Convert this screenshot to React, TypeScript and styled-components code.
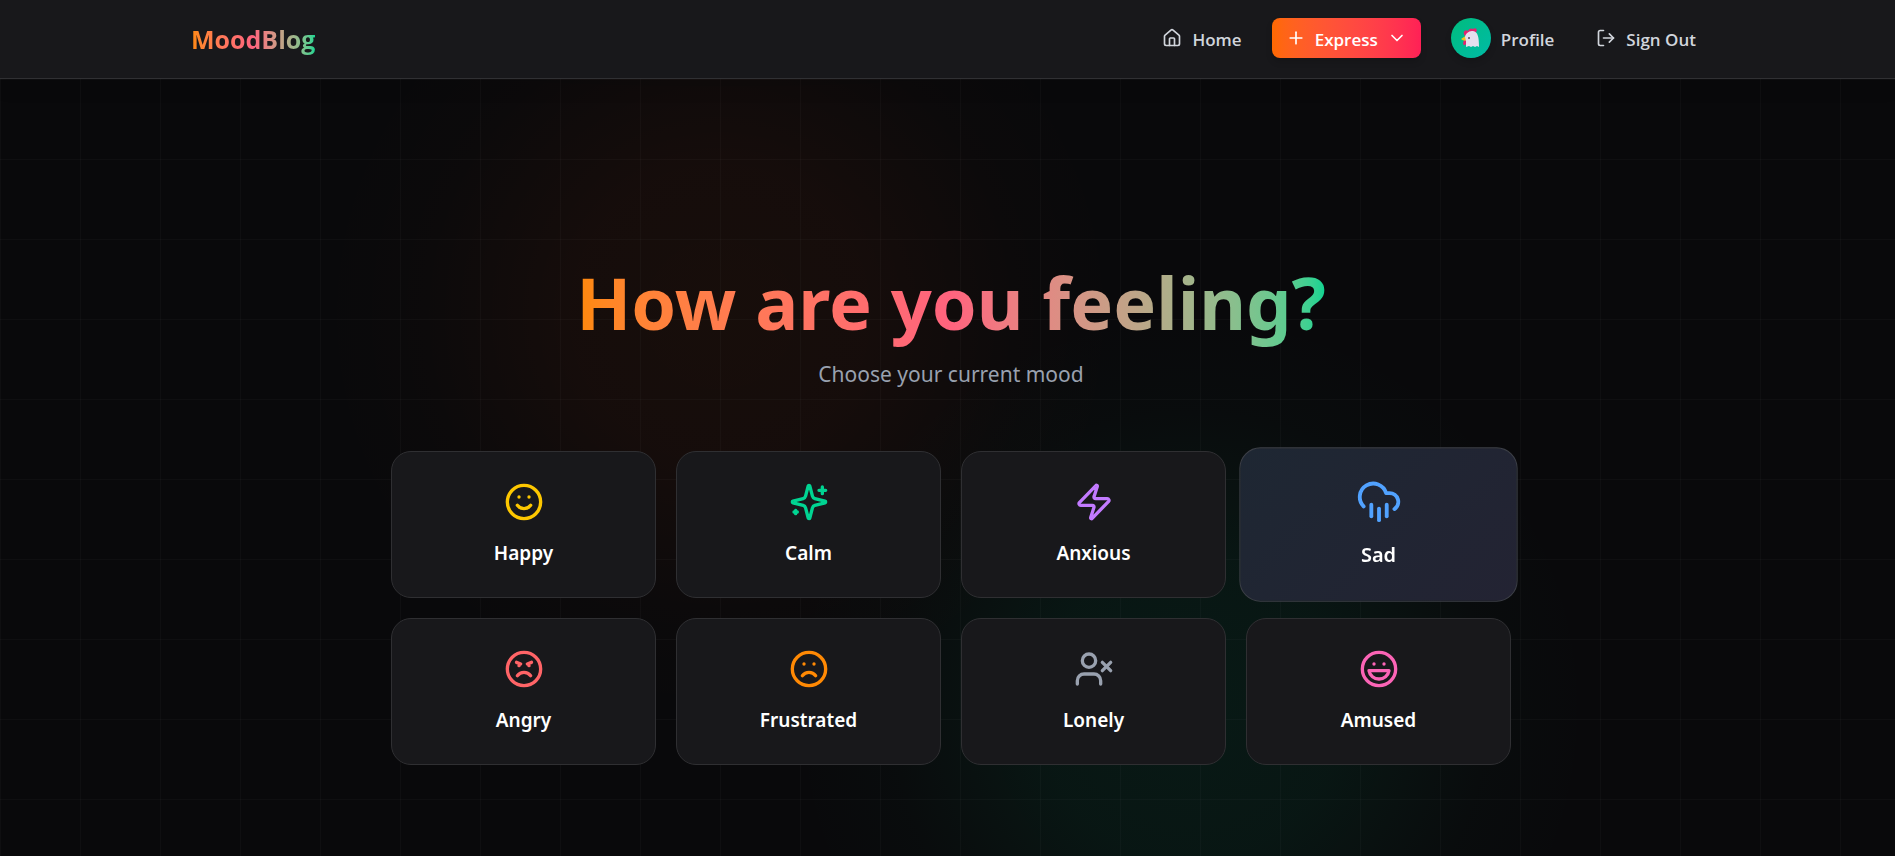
import React from 'react';
import styled, { createGlobalStyle } from 'styled-components';
import { Smile, Zap, CloudRain, Angry, Frown, UserX, Laugh, House, Plus, ChevronDown, LogOut } from 'lucide-react';

const GlobalStyle = createGlobalStyle`
  *, *::before, *::after { box-sizing: border-box; }
  html, body, #root { height: 100%; }
  body {
    margin: 0;
    background: #09090b;
    color: #fff;
    font-family: 'Noto Sans', 'Open Sans', sans-serif;
    overflow-x: hidden;
  }
`;

const rainbow = 'linear-gradient(to right in oklab, #ff8904, #ff637e, #00d492)';

const Page = styled.div`
  display: flex;
  flex-direction: column;
  min-height: 100%;
`;

const Header = styled.header`
  position: relative;
  z-index: 1;
  height: 79px;
  padding: 0 0 2px 7px;
  background: #18181b;
  border-bottom: 1px solid #303033;
  box-shadow: 0 10px 15px rgba(0, 0, 0, 0.1);
  display: flex;
  align-items: center;
  justify-content: center;
  font-family: 'Open Sans', 'Noto Sans', sans-serif;
`;

const HeaderInner = styled.div`
  width: 100%;
  max-width: 1520px;
  display: flex;
  align-items: center;
  justify-content: space-between;
`;

const Logo = styled.a`
  padding-top: 2px;
  font-size: 25px;
  line-height: 32px;
  font-weight: 700;
  text-decoration: none;
  color: transparent;
  background: ${rainbow};
  background-clip: text;
`;

const Nav = styled.nav`
  display: flex;
  align-items: center;
`;

const NavLink = styled.a`
  display: flex;
  align-items: center;
  gap: 10px;
  padding: 0 15px;
  font-size: 17px;
  line-height: 24px;
  font-weight: 600;
  color: #d1d5dc;
  text-decoration: none;
`;

const SignOutButton = styled.button`
  display: flex;
  align-items: center;
  gap: 10px;
  margin-left: 12px;
  padding: 0 15px;
  border: 0;
  background: none;
  font: 600 17px/24px 'Open Sans', sans-serif;
  color: #d1d5dc;
`;

const ExpressButton = styled.button`
  display: flex;
  align-items: center;
  gap: 9px;
  height: 40px;
  margin: 0 15px;
  padding: 0 14px;
  border: 0;
  border-radius: 8px;
  font: 600 17px/24px 'Open Sans', sans-serif;
  color: #fff;
  background: linear-gradient(to right in oklab, #ff6900, #ff2056);
  box-shadow: 0 4px 6px rgba(0, 0, 0, 0.15);
`;

const Label = styled.span`
  padding-top: 3px;
`;

const Avatar = styled.span`
  display: grid;
  place-items: center;
  width: 40px;
  height: 40px;
  border-radius: 50%;
  background: linear-gradient(135deg, #00bc7d, #00bba7);
  box-shadow: 0 4px 6px rgba(0, 0, 0, 0.15);
`;

const Main = styled.main`
  flex: 1;
  padding: 178px 0 88px 7px;
  display: flex;
  flex-direction: column;
  align-items: center;
  background:
    linear-gradient(to right, rgba(255, 255, 255, 0.025) 1px, transparent 1px) 0 0 / 80px 80px,
    linear-gradient(to bottom, rgba(255, 255, 255, 0.025) 1px, transparent 1px) 0 0 / 80px 80px,
    radial-gradient(circle at 720px 235px, rgba(255, 90, 0, 0.06), rgba(255, 80, 10, 0.05) 150px, rgba(255, 80, 10, 0.012) 300px, transparent 400px),
    radial-gradient(circle at 1190px 630px, rgba(0, 188, 125, 0.09), rgba(0, 188, 125, 0.075) 150px, rgba(0, 188, 125, 0.016) 300px, transparent 400px),
    #09090b;
`;

const Title = styled.h1`
  margin: 0;
  padding-bottom: 8px;
  font-size: 72px;
  line-height: 90px;
  font-weight: 700;
  text-align: center;
  color: transparent;
  background: ${rainbow};
  background-clip: text;
`;

const Subtitle = styled.p`
  margin: 3px 0 0;
  font-size: 21px;
  line-height: 32px;
  color: #99a1af;
`;

const MoodGrid = styled.div`
  width: 100%;
  max-width: 1120px;
  margin-top: 61px;
  display: grid;
  grid-template-columns: repeat(4, 1fr);
  gap: 20px;
`;

const MoodCard = styled.button<{ $active?: boolean }>`
  display: flex;
  flex-direction: column;
  align-items: center;
  justify-content: center;
  gap: 16px;
  height: 147px;
  padding: 0;
  border: 1px solid ${(p) => (p.$active ? '#3c3f47' : '#2f2f32')};
  border-radius: 20px;
  font: 600 19px/30px 'Noto Sans', sans-serif;
  color: #fff;
  background: ${(p) => (p.$active ? 'linear-gradient(135deg, #1e2733, #232333)' : '#18181b')};
  transform: ${(p) => (p.$active ? 'scale(1.05)' : 'none')};

  svg {
    transform: ${(p) => (p.$active ? 'scale(1.1)' : 'none')};
  }
`;

const Sparkles = ({ color }: { color: string; size?: number }) => (
  <svg width="40" height="40" viewBox="0 0 24 24" fill="none" stroke={color} strokeWidth="2" strokeLinecap="round" strokeLinejoin="round">
    <path d="M9.937 15.5A2 2 0 0 0 8.5 14.063l-6.135-1.582a.5.5 0 0 1 0-.962L8.5 9.936A2 2 0 0 0 9.937 8.5l1.582-6.135a.5.5 0 0 1 .963 0L14.063 8.5A2 2 0 0 0 15.5 9.937l6.135 1.581a.5.5 0 0 1 0 .964L15.5 14.063a2 2 0 0 0-1.437 1.437l-1.582 6.135a.5.5 0 0 1-.963 0z" />
    <path d="M20 3v4M22 5h-4M4 17v2M5 18H3" />
  </svg>
);

const Chicken = () => (
  <svg width="20" height="20" viewBox="0 0 20 20" aria-hidden="true">
    <path d="M4 8C1 4 4 1 7 3C8 0 11 0 12 1C15-1 17 2 15 4L8 8Z" fill="#e2246f" />
    <path d="M4 12C1 14 2 18 4 17C6 16 6 13 5 12Z" fill="#e2246f" />
    <path d="M6 7L0 11Q3 14 7 12Z" fill="#f5c21b" />
    <path d="M4 9C5 4 9 3 12 3C17 4 18 9 18 19L16 18L14 19L12 18L10 19L8 18L5 19L5 13Z" fill="#e5dfee" />
    <circle cx="8" cy="10" r="1" fill="#55515f" />
  </svg>
);

const moods = [
  { name: 'Happy', Icon: Smile, color: '#fdc700' },
  { name: 'Calm', Icon: Sparkles, color: '#00d492' },
  { name: 'Anxious', Icon: Zap, color: '#c27aff' },
  { name: 'Sad', Icon: CloudRain, color: '#51a2ff', active: true },
  { name: 'Angry', Icon: Angry, color: '#ff6467' },
  { name: 'Frustrated', Icon: Frown, color: '#ff8904' },
  { name: 'Lonely', Icon: UserX, color: '#99a1af' },
  { name: 'Amused', Icon: Laugh, color: '#fb64b6' },
];

export default function App() {
  return (
    <Page>
      <GlobalStyle />
      <Header>
        <HeaderInner>
          <Logo href="#">MoodBlog</Logo>
          <Nav>
            <NavLink href="#"><House size={20} /><Label>Home</Label></NavLink>
            <ExpressButton type="button">
              <Plus size={20} />
              <Label>Express</Label>
              <ChevronDown size={20} />
            </ExpressButton>
            <NavLink href="#"><Avatar><Chicken /></Avatar><Label>Profile</Label></NavLink>
            <SignOutButton type="button"><LogOut size={20} /><Label>Sign Out</Label></SignOutButton>
          </Nav>
        </HeaderInner>
      </Header>
      <Main>
        <Title>How are you feeling?</Title>
        <Subtitle>Choose your current mood</Subtitle>
        <MoodGrid>
          {moods.map(({ name, Icon, color, active }) => (
            <MoodCard key={name} type="button" $active={active}>
              <Icon size={40} color={color} />
              {name}
            </MoodCard>
          ))}
        </MoodGrid>
      </Main>
    </Page>
  );
}
